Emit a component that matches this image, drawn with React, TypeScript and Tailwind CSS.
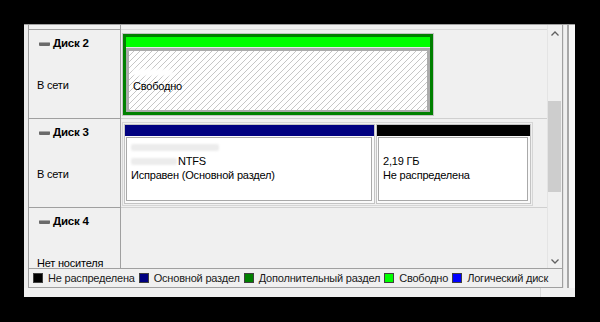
import React from "react";

const hatch =
  "bg-[image:repeating-linear-gradient(135deg,#ffffff_0px,#ffffff_3.2px,#c6c6c6_3.2px,#c6c6c6_4.24px)]";

const legend = [
  { color: "bg-black", label: "Не распределена" },
  { color: "bg-[#000080]", label: "Основной раздел" },
  { color: "bg-[#008000]", label: "Дополнительный раздел" },
  { color: "bg-[#00ff00]", label: "Свободно" },
  { color: "bg-[#0000ff]", label: "Логический диск" },
];

const DiskIcon = () => (
  <span className="inline-block w-[11px] h-[4px] rounded-[1px] bg-[#6a6a6a] border-t border-[#a8a8a8]" />
);

const DiskCell = ({ name, status }: { name: string; status: string }) => (
  <div className="w-[92px] shrink-0 flex flex-col border-r border-b border-[#a0a0a0] pt-[7px]">
    <div className="h-[14px] flex items-center gap-[3px] pl-[10px]">
      <DiskIcon />
      <span className="font-bold text-[11.5px]">{name}</span>
    </div>
    <div className="mt-[27px] h-[14px] leading-[14px] pl-[8px] whitespace-nowrap">{status}</div>
  </div>
);

const Blurred = ({ w, tone }: { w: number; tone: string }) => (
  <div className={`h-[7px] rounded-[2px] blur-[1px] ${tone}`} style={{ width: w }} />
);

const Chevron = ({ up }: { up?: boolean }) => (
  <svg width="8" height="5" viewBox="0 0 8 5">
    <polyline
      points={up ? "0.5,4.5 4,1 7.5,4.5" : "0.5,0.5 4,4 7.5,0.5"}
      fill="none"
      stroke="#606060"
      strokeWidth="1.3"
    />
  </svg>
);

const Partition = ({
  bar,
  w,
  children,
}: {
  bar: string;
  w: number;
  children: React.ReactNode;
}) => (
  <div className="h-full flex flex-col border border-[#c4c4c4] bg-[#fafafa]" style={{ width: w }}>
    <div className={`h-[11px] shrink-0 ${bar}`} />
    <div className="flex-1 pt-[1px] pl-[1px] pr-[2px] pb-[2px]">
      <div className="h-full bg-white border border-[#a9a9a9] pl-[4px] pt-[2px] leading-[14px]">
        {children}
      </div>
    </div>
  </div>
);

export default function App() {
  return (
    <div className="w-[600px] h-[322px] bg-black overflow-hidden pt-[24px] pl-[24px] font-['Liberation_Sans',Arial,sans-serif] text-[11px] tracking-[-0.2px] text-black">
      <div className="w-[551px] h-[273px] bg-[#f0f0f0] border-t border-[#a0a0a0] flex flex-col">
        <div className="flex h-[263px]">
          <div className="w-[4px] bg-[#ececec]" />
          <div className="w-[535px] flex flex-col border-l border-r border-b border-[#a0a0a0]">
            <div className="flex h-[243px]">
              <div className="w-[518px] flex flex-col overflow-hidden">
                <div className="h-[5px] shrink-0 flex">
                  <div className="w-[92px] border-r border-b border-[#a0a0a0]" />
                  <div className="flex-1 border-b border-[#dadada]" />
                </div>

                {/* Диск 2 */}
                <div className="flex h-[89px] shrink-0">
                  <DiskCell name="Диск 2" status="В сети" />
                  <div className="flex-1 border-b border-[#d0d0d0] pt-[3px] pl-[1px]">
                    <div className="w-[312px] h-[83px] border border-[#c4c4c4]">
                      <div className="h-full border-[3px] border-[#008000] flex flex-col">
                        <div className="h-[11px] bg-[#00ff00] border-b border-[#e8e8e8]" />
                        <div className="flex-1 bg-[#ababab] pt-[3px] px-[3px] pb-[2px]">
                          <div className={`h-full ${hatch} pl-[4px] leading-[14px]`}>
                            <div className="h-[14px]" />
                            <div className="h-[14px] flex items-center">
                              <Blurred w={40} tone="bg-white" />
                            </div>
                            <div className="h-[14px]">Свободно</div>
                          </div>
                        </div>
                      </div>
                    </div>
                  </div>
                </div>

                {/* Диск 3 */}
                <div className="flex h-[89px] shrink-0">
                  <DiskCell name="Диск 3" status="В сети" />
                  <div className="flex-1 border-b border-[#d0d0d0] pt-[3px] pl-[1px]">
                    <div className="w-[411px] h-[84px] border border-[#d6d6d6] p-[1px] flex gap-[1px]">
                      <Partition bar="bg-[#000080]" w={251}>
                        <div className="h-[14px] flex items-center">
                          <Blurred w={88} tone="bg-[#ececec]" />
                        </div>
                        <div className="h-[14px] flex items-center">
                          <Blurred w={46} tone="bg-[#ececec]" />
                          <span className="ml-[1px]">NTFS</span>
                        </div>
                        <div className="h-[14px] whitespace-nowrap">Исправен (Основной раздел)</div>
                      </Partition>
                      <Partition bar="bg-black" w={155}>
                        <div className="h-[14px]" />
                        <div className="h-[14px]">2,19 ГБ</div>
                        <div className="h-[14px] whitespace-nowrap">Не распределена</div>
                      </Partition>
                    </div>
                  </div>
                </div>

                {/* Диск 4 */}
                <div className="flex h-[89px] shrink-0">
                  <DiskCell name="Диск 4" status="Нет носителя" />
                  <div className="flex-1 border-b border-[#d0d0d0]" />
                </div>
              </div>

              <div className="w-[15px] flex flex-col border-l border-[#e4e4e4] bg-[#f0f0f0]">
                <div className="h-[17px] flex items-center justify-center">
                  <Chevron up />
                </div>
                <div className="h-[59px]" />
                <div className="h-[91px] mr-[1px] bg-[#cdcdcd]" />
                <div className="flex-1" />
                <div className="h-[14px] flex items-center justify-center">
                  <Chevron />
                </div>
              </div>
            </div>

            <div className="h-[20px] border-t border-[#a0a0a0] flex items-center pl-[4px] gap-[4px] bg-[#f0f0f0]">
              {legend.map((item) => (
                <div key={item.label} className="flex items-center gap-[5px] shrink-0">
                  <span className={`w-[10px] h-[10px] shrink-0 border border-[#404040] ${item.color}`} />
                  <span className="whitespace-nowrap text-[#1a1a1a]">{item.label}</span>
                </div>
              ))}
            </div>
          </div>
          <div className="w-[12px] flex">
            <div className="w-[4px] border-l border-[#e2e2e2]" />
            <div className="w-[2px] bg-[#a8a8a8]" />
            <div className="flex-1 bg-[#f7f7f7]" />
          </div>
        </div>
        <div className="flex-1 flex">
          <div className="w-[516px]" />
          <div className="w-[1px] bg-[#d8d8d8]" />
          <div className="flex-1" />
        </div>
      </div>
    </div>
  );
}
